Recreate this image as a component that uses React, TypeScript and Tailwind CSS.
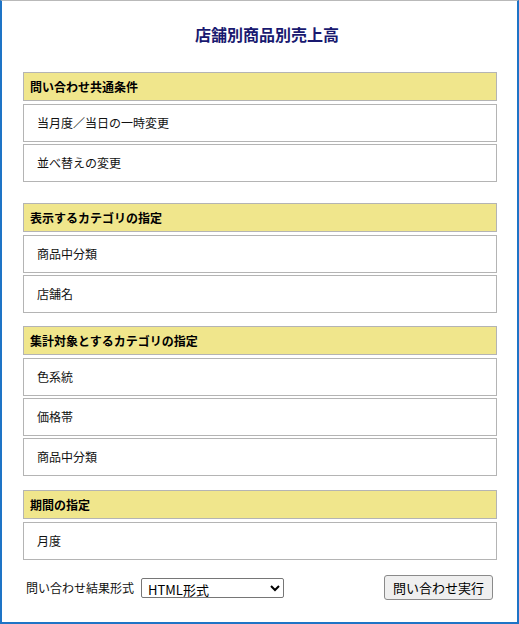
import React from 'react'

type Section = {
    title: string;
    items: string[];
    gap: string;
}

const sections: Section[] = [
    { title: '問い合わせ共通条件', items: ['当月度／当日の一時変更', '並べ替えの変更'], gap: 'mt-0' },
    { title: '表示するカテゴリの指定', items: ['商品中分類', '店舗名'], gap: 'mt-[21px]' },
    { title: '集計対象とするカテゴリの指定', items: ['色系統', '価格帯', '商品中分類'], gap: 'mt-[13px]' },
    { title: '期間の指定', items: ['月度'], gap: 'mt-[14px]' },
]

function SectionBlock({ section }: { section: Section }) {
    return (
        <div className={section.gap}>
            <div className='h-[29px] flex items-center pl-[6px] bg-[#f0e68c] border border-[#b4b4b4] text-[12px] font-bold text-black'>
                {section.title}
            </div>
            {section.items.map((item, i) => (
                <div
                    key={item + i}
                    className={(i === 0 ? 'mt-[3px] ' : 'mt-[2px] ') + 'h-[38px] flex items-center pl-[13px] bg-white border border-[#b4b4b4] text-[12px] text-[#111]'}
                >
                    {item}
                </div>
            ))}
        </div>
    )
}

export default function App() {
    return (
        <div
            className='w-[519px] h-[624px] bg-white border-t border-t-[#b9b9b9] border-l-2 border-r-2 border-b-2 border-l-[#1e74c6] border-r-[#1e74c6] border-b-[#1e74c6] flex flex-col pl-[21px] pr-[20px]'
            style={{ fontFamily: '"Noto Sans CJK JP", "Noto Sans", sans-serif' }}
        >
            <h1 className='pt-[21px] h-[71px] text-center pl-[14px] text-[16px] leading-[24px] font-bold text-[#191970]'>
                店舗別商品別売上高
            </h1>

            {sections.map((s) => (
                <SectionBlock key={s.title} section={s} />
            ))}

            <div className='mt-[15px] flex items-center justify-between pl-[3px] pr-[4px]'>
                <div className='flex items-center gap-[7px] text-[12px] text-[#111]'>
                    <span>問い合わせ結果形式</span>
                    <select className='w-[143px] h-[20px] border border-[#767676] rounded-[2px] bg-white text-[13px] leading-[16px] text-black pl-[2px]' defaultValue='html'>
                        <option value='html'>HTML形式</option>
                        <option value='csv'>CSV形式</option>
                    </select>
                </div>
                <button className='w-[109px] h-[25px] border border-[#8a8a8a] rounded-[3px] bg-[#efefef] text-[13px] text-black'>
                    問い合わせ実行
                </button>
            </div>
        </div>
    )
}
